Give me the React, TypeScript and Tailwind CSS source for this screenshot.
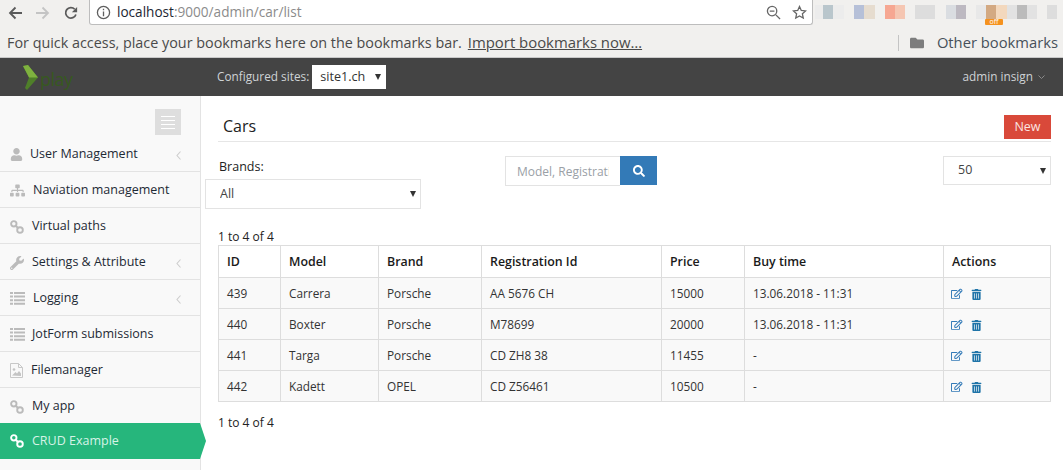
import React from "react";
import { FaUser, FaSitemap, FaWrench, FaSearch, FaRegEdit, FaTrashAlt, FaFolder } from "react-icons/fa";

const font = { fontFamily: '"Open Sans", sans-serif' };

function LinkIcon() {
  return (
    <svg width="14" height="14" viewBox="0 0 14 14" fill="none" stroke="currentColor" strokeWidth="1.9">
      <circle cx="3.8" cy="3.800" r="2.700" />
      <circle cx="10" cy="10" r="2.800" />
      <path d="M5.500 5.500 8 8" />
    </svg>
  );
}

function ListIcon() {
  return (
    <svg width="15" height="13" viewBox="0 0 15 13" fill="currentColor">
      <path d="M0 0h3v2H0zM4 0h11v2H4zM0 3.600h3v2H0zM4 3.600h11v2H4zM0 7.200h3v2H0zM4 7.200h11v2H4zM0 10.800h3v2H0zM4 10.800h11v2H4z" />
    </svg>
  );
}

function FileImageIcon() {
  return (
    <svg width="13" height="15" viewBox="0 0 13 15" fill="none">
      <path d="M.5.500h8l4 4v10H.5z" stroke="#c8c8c8" />
      <path d="M8.500.500v4h4" stroke="#c8c8c8" />
      <circle cx="4" cy="6.500" r="1.300" fill="#c4c4c4" />
      <path d="M2 12.500 5.500 9l1.500 1.500L9 8l2 2.500v2.500z" fill="#c4c4c4" />
    </svg>
  );
}

function Chevron() {
  return (
    <svg width="5" height="9" viewBox="0 0 5 9" fill="none" stroke="#cdcdcd" strokeWidth="1.1" className="absolute left-[176px] top-[15px]">
      <path d="M4.500 .5 1 4.500l3.500 4" />
    </svg>
  );
}

function Sel({ value, cls }: { value: string; cls: string }) {
  return (
    <div className="relative shrink-0 w-fit">
      <select defaultValue={value} className={`appearance-none block rounded-none outline-none bg-white ${cls}`}>
        <option>{value}</option>
      </select>
      <svg width="6" height="6" viewBox="0 0 6 6" className="absolute right-[5px] top-1/2 -mt-[3px] pointer-events-none">
        <path d="M0 0h6L3 6z" fill="#333" />
      </svg>
    </div>
  );
}

const menu: { label: string; icon: React.ReactNode; gap: string; arrow?: boolean; active?: boolean }[] = [
  { label: "User Management", icon: <FaUser className="text-[13px]" />, gap: "w-[20px]", arrow: true },
  { label: "Naviation management", icon: <FaSitemap className="text-[15px]" />, gap: "w-[23px]" },
  { label: "Virtual paths", icon: <LinkIcon />, gap: "w-[22px]" },
  { label: "Settings & Attribute", icon: <FaWrench className="text-[14px]" />, gap: "w-[22px]", arrow: true },
  { label: "Logging", icon: <ListIcon />, gap: "w-[23px]", arrow: true },
  { label: "JotForm submissions", icon: <ListIcon />, gap: "w-[22px]" },
  { label: "Filemanager", icon: <FileImageIcon />, gap: "w-[21px]" },
  { label: "My app", icon: <LinkIcon />, gap: "w-[22px]" },
  { label: "CRUD Example", icon: <LinkIcon />, gap: "w-[22px]", active: true },
];

const rows = [
  ["439", "Carrera", "Porsche", "AA 5676 CH", "15000", "13.06.2018 - 11:31"],
  ["440", "Boxter", "Porsche", "M78699", "20000", "13.06.2018 - 11:31"],
  ["441", "Targa", "Porsche", "CD ZH8 38", "11455", "-"],
  ["442", "Kadett", "OPEL", "CD Z56461", "10500", "-"],
];

const heads = ["ID", "Model", "Brand", "Registration Id", "Price", "Buy time", "Actions"];
const widths = ["w-[62px]", "w-[98px]", "w-[103px]", "w-[180px]", "w-[83px]", "w-[199px]", "w-[107px]"];

const blurred = [
  "w-[2px]", "w-[8px] bg-[#ececec]", "w-[10px] bg-[#b9c6cc]", "w-[11px] bg-[#ececec]", "w-[10px]",
  "w-[10px] bg-[#b6c0d8]", "w-[11px] bg-[#e6dccf]", "w-[10px]",
  "w-[10px] bg-[#f6a792]", "w-[10px] bg-[#f5c6b2]", "w-[10px]",
  "w-[20px] bg-[#dddddd]", "w-[11px]",
  "w-[10px] bg-[#dadde1]", "w-[10px] bg-[#bdb9c1]", "w-[10px]",
  "w-[10px] bg-[#e8e8e8]", "w-[10px] bg-[#d3a982]", "w-[11px] bg-[#f3d8bd]", "w-[10px] bg-[#e2e2e2]", "w-[10px] bg-[#bbbbbb]", "w-[10px] bg-[#e2e2e2]", "w-[10px]", "w-[10px] bg-[#dddddd]",
];

export default function App() {
  return (
    <div className="w-[1063px] h-[470px] overflow-hidden flex flex-col bg-white text-[#222]" style={font}>
      {/* Browser toolbar */}
      <div className="h-[28px] bg-[#f1f0ee] flex items-start">
        <div className="w-[89px] h-[25px] flex items-center shrink-0 pl-[8px]">
          <svg width="14" height="14" viewBox="0 0 14 14" fill="none" stroke="#5a5a5a" strokeWidth="1.8"><path d="M14 7H2M7.500 1.500 2 7l5.500 5.500" /></svg>
          <svg width="14" height="14" viewBox="0 0 14 14" fill="none" stroke="#c4c4c4" strokeWidth="1.8" className="ml-[14px]"><path d="M0 7h12M6.500 1.500 12 7l-5.500 5.500" /></svg>
          <svg width="14" height="14" viewBox="0 0 16 16" fill="none" className="ml-[14px]"><path d="M13.600 9.600A6 6 0 1 1 12.300 3.700" stroke="#5a5a5a" strokeWidth="2" /><path d="M15 1v6H9z" fill="#5a5a5a" /></svg>
        </div>
        <div className="w-[724px] h-[25px] shrink-0 bg-white border-l border-r border-b border-[#bdbdbd] rounded-b-[3px] flex items-center pl-[6px] pr-[5px] text-[13.600px] leading-[22px]">
          <svg width="15" height="15" viewBox="0 0 16 16" fill="none" stroke="#5f5f5f" strokeWidth="1.4" className="mr-[6px] shrink-0"><circle cx="8" cy="8" r="6.500" /><path d="M8 7v5M8 4v1.600" /></svg>
          <span className="text-[#1d2733]">localhost</span>
          <span className="text-[#8b8b8b]">:9000/admin/car/list</span>
          <div className="ml-auto flex items-center gap-[11px]">
            <svg width="15" height="15" viewBox="0 0 16 16" fill="none" stroke="#666" strokeWidth="1.4"><circle cx="6.500" cy="6.500" r="5" /><path d="M10.500 10.500 15 15M4 6.500h5" /></svg>
            <svg width="15" height="15" viewBox="0 0 16 16" fill="none" stroke="#666" strokeWidth="1.4"><path d="m8 1.600 1.900 4.200 4.600.5-3.400 3.100.9 4.500L8 11.700l-4 2.200.9-4.500L1.500 6.300l4.600-.5z" /></svg>
          </div>
        </div>
        <div className="relative flex items-center h-[14px] mt-[5px]">
          {blurred.map((c, i) => (
            <div key={i} className={`${c} h-[14px]`} />
          ))}
          <div className="absolute left-[172px] top-[14px] w-[18px] h-[6px] bg-[#f5921e] rounded-[1px] text-white text-[7px] leading-[6px] text-center">off</div>
        </div>
      </div>

      {/* Bookmarks bar */}
      <div className="h-[30px] bg-[#f1f0ee] border-b border-[#c9c9c9] flex items-center pl-[7px] pr-[5px] text-[#4a4a4a]">
        <span className="text-[14.370px]">For quick access, place your bookmarks here on the bookmarks bar.</span>
        <span className="ml-[6px] underline text-[14.900px]">Import bookmarks now…</span>
        <div className="ml-auto flex items-center">
          <div className="w-px h-[16px] bg-[#c4c4c4] mr-[11px]" />
          <FaFolder className="text-[#7d7d7d] text-[14px] mr-[13px]" />
          <span className="text-[#47505a] text-[14.750px]">Other bookmarks</span>
        </div>
      </div>

      {/* Navbar */}
      <div className="h-[38px] bg-[#444444] flex items-center text-[11.800px] text-[#cfd3d6]">
        <div className="w-[217px] shrink-0 flex items-center pl-[23px]">
          <svg width="16" height="25" viewBox="0 0 16 25"><path d="M0 1 5 0l10 12.500L4 25l-2-2 4-10.500z" fill="#4f7f29" /><path d="M0 1 5 0l10 12.500H6z" fill="#7fb23f" /></svg>
          <span className="text-[#37591f] text-[18px] leading-none ml-[1px] mt-[3px] tracking-[-0.5px]">play</span>
        </div>
        <span>Configured sites:</span>
        <div className="ml-[3px]">
          <Sel value="site1.ch" cls="w-[74px] h-[24px] text-[#333] text-[12.600px] pl-[8px]" />
        </div>
        <div className="ml-auto pr-[18px] flex items-center gap-[5px]">
          <span>admin insign</span>
          <svg width="7" height="5" viewBox="0 0 7 5" fill="none" stroke="#8a8a8a" strokeWidth="1"><path d="m.5.500 3 3 3-3" /></svg>
        </div>
      </div>

      <div className="flex-1 flex min-h-0">
        {/* Sidebar */}
        <div className="w-[201px] shrink-0 bg-[#f9f9f9] border-r border-[#e3e3e3] flex flex-col">
          <div className="h-[40px] shrink-0 flex items-start justify-end pr-[19px] pt-[13px]">
            <div className="w-[26px] h-[26px] bg-[#dedede] flex flex-col items-center justify-center gap-[3px]">
              <div className="w-[14px] h-px bg-white" />
              <div className="w-[14px] h-px bg-white" />
              <div className="w-[14px] h-px bg-white" />
              <div className="w-[14px] h-px bg-white" />
            </div>
          </div>
          {menu.map((m) => (
            <div
              key={m.label}
              className={`relative w-[200px] shrink-0 flex items-center pl-[10px] text-[12.500px] h-[36px] ${m.active ? "-mt-px bg-[#26b67c] text-[#d7f3e7]" : "pt-[2px] border-b border-[#e3e3e3] text-[#1e2a35]"}`}
            >
              <span className={`${m.gap} shrink-0 flex items-center ${m.active ? "text-white" : "text-[#bbbbbb]"}`}>
                {m.icon}
              </span>
              <span>{m.label}</span>
              {m.arrow && <Chevron />}
              {m.active && (
                <svg width="6" height="36" viewBox="0 0 6 36" className="absolute left-[200px] top-0">
                  <path d="M0 0 6 18 0 36z" fill="#26b67c" />
                </svg>
              )}
            </div>
          ))}
        </div>

        {/* Main */}
        <div className="flex-1 min-w-0 pl-[17px] pr-[12px] text-[12px] text-[#222]">
          <div className="h-[46px] flex items-end justify-between border-b border-[#e6e6e6] pl-[5px] pb-[2px]">
            <span className="text-[16px] leading-[22px] text-[#222] mb-[2px]">Cars</span>
            <button className="w-[47px] h-[24px] bg-[#d9493a] text-[#fbe4e1] text-[12.500px]">New</button>
          </div>
          <div className="flex items-start mt-[14px] h-[73px]">
            <div className="w-[287px] shrink-0 pt-[2px]">
              <div className="pl-[1px] text-[12.500px] leading-[18px]">Brands:</div>
              <div className="-ml-[13px] mt-[3px]">
                <Sel value="All" cls="w-[216px] h-[30px] border border-[#e3e3e3] pl-[14px] text-[12.500px] text-[#444]" />
              </div>
            </div>
            <div className="flex h-[30px]">
              <input placeholder="Model, Registration" className="w-[115px] h-[30px] border border-[#e3e3e3] border-r-0 px-[11px] text-[12px] placeholder:text-[#9aa0a6] outline-none bg-white" />
              <button className="w-[37px] h-[29px] bg-[#337ab7] flex items-center justify-center text-white text-[12px]"><FaSearch /></button>
            </div>
            <div className="ml-auto">
              <Sel value="50" cls="w-[108px] h-[29px] border border-[#e3e3e3] pl-[14px] text-[12.500px] text-[#444]" />
            </div>
          </div>
          <div className="text-[12px] leading-[16px] h-[16px]">1 to 4 of 4</div>
          <table className="table-fixed border-collapse w-[832px]">
            <colgroup>
              {widths.map((w, i) => <col key={i} className={w} />)}
            </colgroup>
            <thead>
              <tr className="h-[32px]">
                {heads.map((h) => (
                  <th key={h} className="border border-[#dddddd] text-left font-semibold text-[12.400px] px-[8px] pt-[2px] text-[#1a1a1a]">{h}</th>
                ))}
              </tr>
            </thead>
            <tbody>
              {rows.map((r) => (
                <tr key={r[0]} className="h-[31px] bg-[#f9f9f9]">
                  {r.map((c, i) => (
                    <td key={i} className="border border-[#dddddd] px-[8px] pt-[2px] text-[11.800px] text-[#333]">{c}</td>
                  ))}
                  <td className="border border-[#dddddd] pl-[7px] pr-[8px] pt-[2px]">
                    <div className="flex items-center gap-[8px] text-[#337ab7] text-[11.500px]">
                      <FaRegEdit />
                      <FaTrashAlt className="text-[#1f74a8] text-[11px]" />
                    </div>
                  </td>
                </tr>
              ))}
            </tbody>
          </table>
          <div className="mt-[13px] leading-[16px]">1 to 4 of 4</div>
        </div>
      </div>
    </div>
  );
}
